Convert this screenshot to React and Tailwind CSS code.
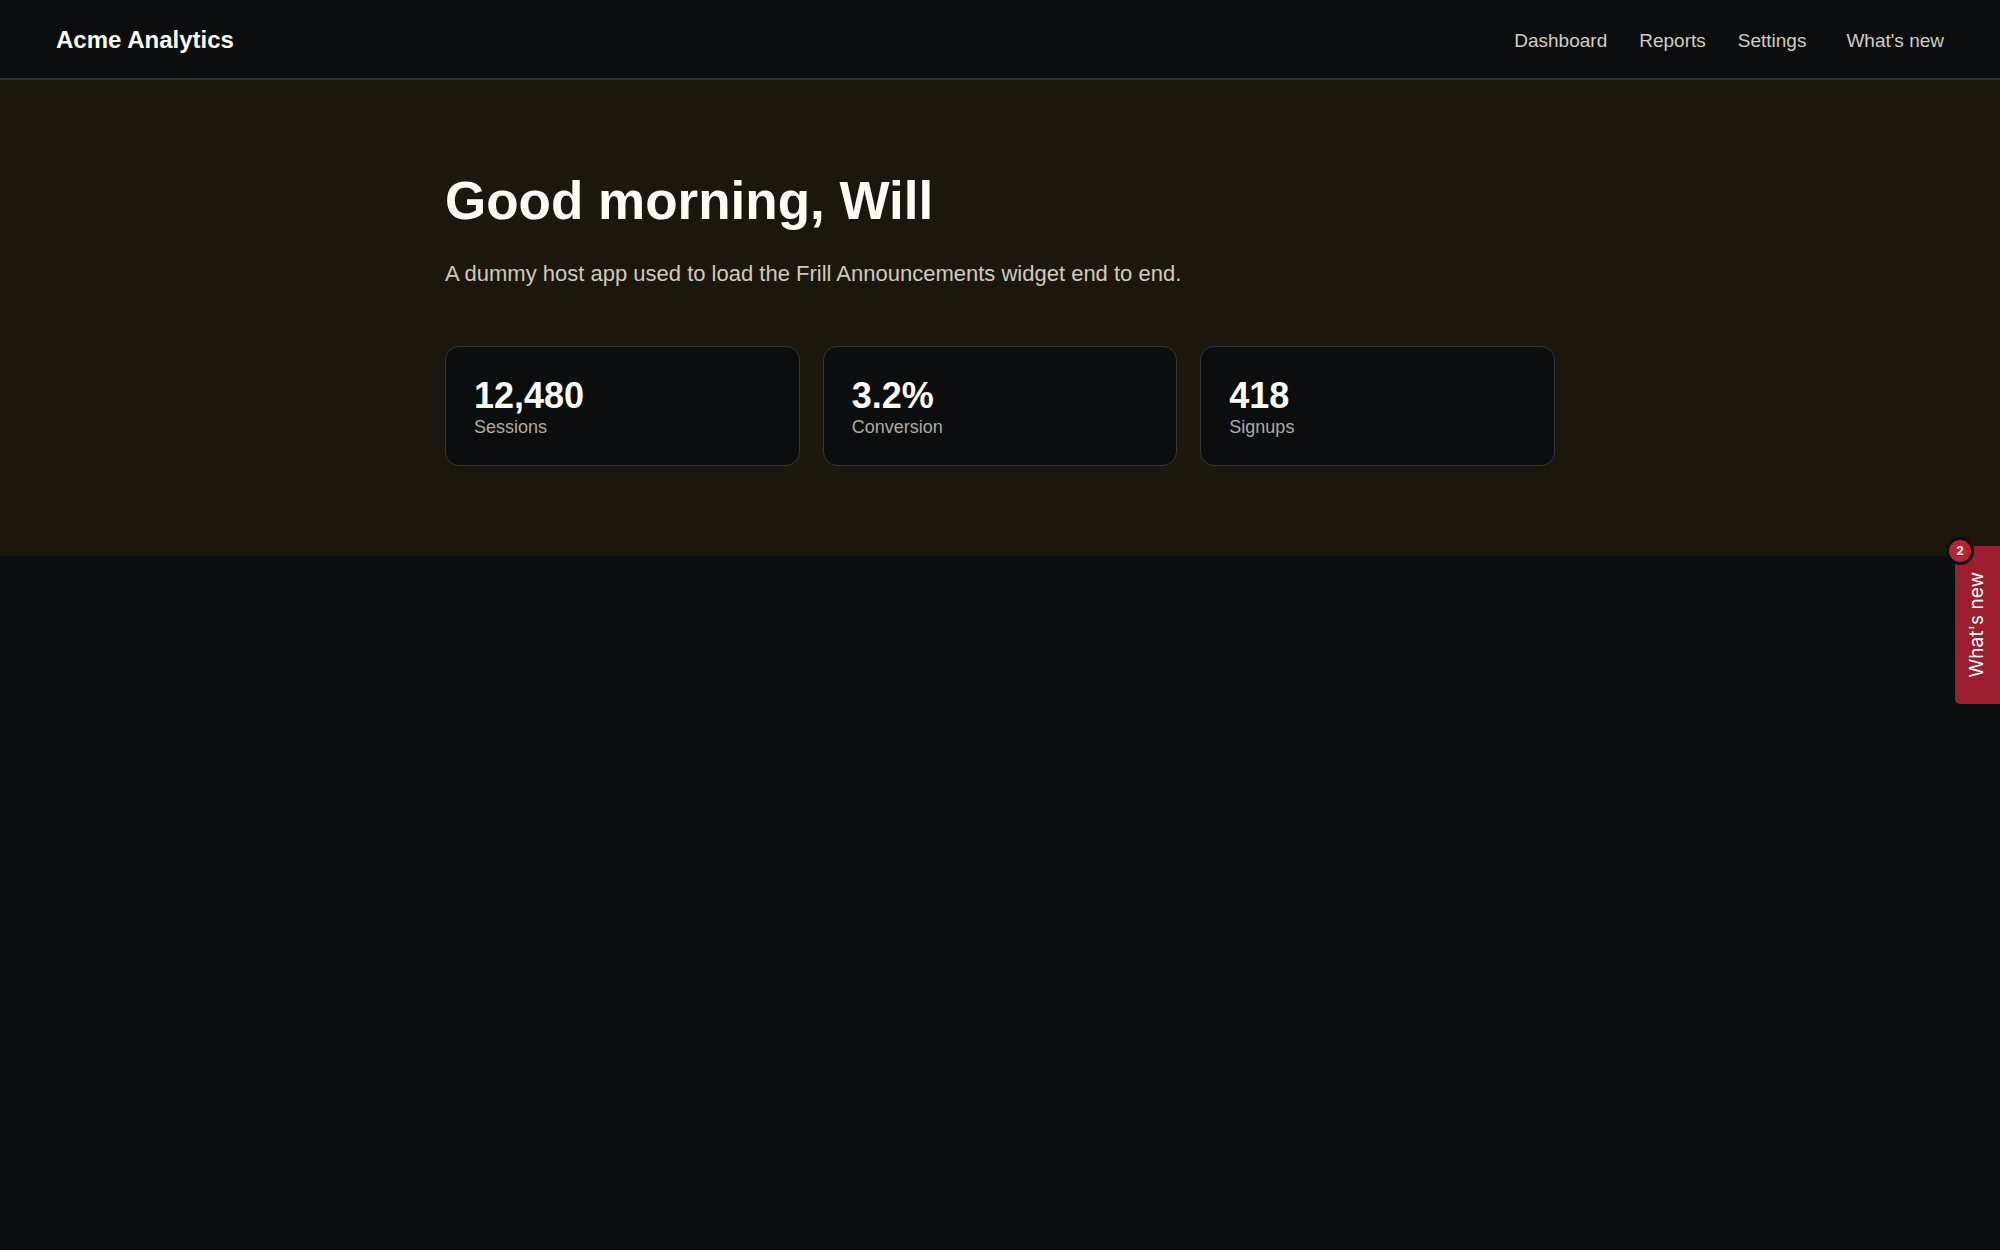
import React from "react";

const links = ["Dashboard", "Reports", "Settings"];

const stats = [
  { label: "Sessions", value: "12,480" },
  { label: "Conversion", value: "3.2%" },
  { label: "Signups", value: "418" },
];

const App = () => {
  return (
    <div className="min-h-screen bg-[#0b0d0e] font-['Liberation_Sans',Arial,sans-serif] text-[#fffdf5]">
      {/* Header */}
      <header className="flex items-start justify-between border-b-2 border-[#2b2d30] px-14 pt-6 pb-5">
        <span className="text-2xl font-bold">Acme Analytics</span>
        <nav className="flex items-center text-[19px] leading-[34px] text-[#d0cec3]">
          <div className="flex gap-8">
            {links.map((link) => (
              <a key={link} href="#">
                {link}
              </a>
            ))}
          </div>
          <button type="button" className="ml-10">
            What's new
          </button>
        </nav>
      </header>

      {/* Hero */}
      <main className="bg-[#1c170c] py-[90px]">
        <div className="mx-auto max-w-[1110px]">
          <h1 className="text-[53px] leading-[62px] font-bold">
            Good morning, Will
          </h1>
          <p className="mt-[26px] text-[22px] leading-8 text-[#d0cabd]">
            A dummy host app used to load the Frill Announcements widget end to
            end.
          </p>
          <div className="mt-14 grid grid-cols-3 gap-[23px]">
            {stats.map((stat) => (
              <div
                key={stat.label}
                className="rounded-[14px] border border-[#34373a] bg-[#0b0d0e] px-7 pt-[29px] pb-[27px]"
              >
                <div className="text-4xl font-bold">{stat.value}</div>
                <div className="text-lg leading-[22px] text-[#aeaba1]">
                  {stat.label}
                </div>
              </div>
            ))}
          </div>
        </div>
      </main>

      {/* Announcements tab */}
      <button
        type="button"
        className="fixed right-0 top-[546px] flex h-[158px] w-[45px] items-center justify-center rounded-l-[5px] bg-[#9c1d2e] font-['Inter',sans-serif] text-[19px] text-white"
      >
        <span className="rotate-180 [writing-mode:vertical-rl]">
          What's new
        </span>
        <span className="absolute -top-[9px] -left-[9px] flex size-7 items-center justify-center rounded-full border-3 border-[#0b0d0e] bg-[#bd202f] text-xs font-bold">
          2
        </span>
      </button>
    </div>
  );
};

export default App;
